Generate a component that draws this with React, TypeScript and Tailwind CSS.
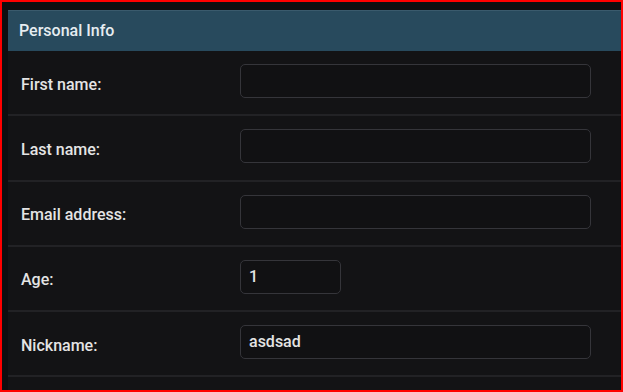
const rows = [
  { label: 'First name:', value: '', short: false },
  { label: 'Last name:', value: '', short: false },
  { label: 'Email address:', value: '', short: false },
  { label: 'Age:', value: '1', short: true },
  { label: 'Nickname:', value: 'asdsad', short: false },
];

export default function App() {
  return (
    <div
      className="w-[623px] h-[392px] overflow-hidden border-2 border-[#ff0000] bg-[#0e0e10] pt-[8px] pl-[6px]"
      style={{ fontFamily: 'Roboto, "Liberation Sans", sans-serif' }}
    >
      <div className="bg-[#131315] h-full">
        <div className="h-[41px] bg-[#284a5d] border-t border-[#3a5a6c] flex items-center pl-[11px] text-[16px] font-medium text-[#e6edf1]">
          Personal Info
        </div>
        {rows.map((r) => (
          <div key={r.label} className="h-[65.25px] border-b-2 border-[#222225] flex items-center">
            <div className="w-[232px] pl-[13px] pt-[4px] text-[16px] font-medium text-[#e4e4e4]">{r.label}</div>
            <div
              className={
                r.short
                  ? 'w-[101px] h-[34px] mb-[3px] rounded-[5px] border border-[#35353a] bg-[#111113] flex items-center px-[8px] text-[16px] font-medium text-[#e4e4e4]'
                  : 'w-[351px] h-[34px] mb-[3px] rounded-[5px] border border-[#35353a] bg-[#111113] flex items-center px-[8px] text-[16px] font-medium text-[#e4e4e4]'
              }
            >
              {r.value}
            </div>
          </div>
        ))}
      </div>
    </div>
  );
}
